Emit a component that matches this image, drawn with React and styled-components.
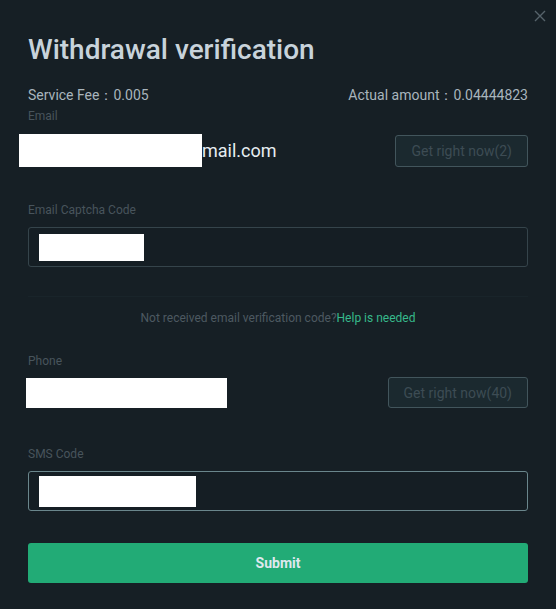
import React from 'react';
import styled, { createGlobalStyle } from 'styled-components';

const GlobalStyle = createGlobalStyle`
  html, body {
    margin: 0;
    padding: 0;
    background: #161f25;
  }
  body {
    font-family: Roboto, "Liberation Sans", Arial, sans-serif;
  }
`;

const App = () => {
  return (
    <>
      <GlobalStyle />
      <Modal>
        <CloseButton aria-label="close">
          <svg width="12" height="12" viewBox="0 0 12 12">
            <path d="M1 1 L11 11 M11 1 L1 11" stroke="#56636b" strokeWidth="1.4" fill="none" />
          </svg>
        </CloseButton>

        <Title>Withdrawal verification</Title>

        <InfoRow>
          <span>Service Fee：0.005</span>
          <span>Actual amount：0.04444823</span>
        </InfoRow>

        <Label $top={3}>Email</Label>
        <FieldRow $top={10}>
          <EmailValue>
            <Redacted $w={183} $h={33} $shift={-9} />
            mail.com
          </EmailValue>
          <CodeButton $h={32}>Get right now(2)</CodeButton>
        </FieldRow>

        <Label $top={35}>Email Captcha Code</Label>
        <Input>
          <Redacted $w={105} $h={27} $shift={0} />
        </Input>

        <Divider />

        <Help>
          Not received email verification code?<HelpLink href="#">Help is needed</HelpLink>
        </Help>

        <Label $top={27}>Phone</Label>
        <FieldRow $top={8}>
          <Redacted $w={201} $h={30} $shift={-2} />
          <CodeButton $h={31}>Get right now(40)</CodeButton>
        </FieldRow>

        <Label $top={38}>SMS Code</Label>
        <Input $focused>
          <Redacted $w={157} $h={31} $shift={0} />
        </Input>

        <SubmitButton>Submit</SubmitButton>
      </Modal>
    </>
  );
};

export default App;

const Modal = styled.div`
  position: relative;
  box-sizing: border-box;
  width: 556px;
  height: 609px;
  padding: 0 28px;
  display: flex;
  flex-direction: column;
  background: #161f25;
  overflow: hidden;
`;

const CloseButton = styled.button`
  position: absolute;
  top: 10px;
  right: 10px;
  width: 12px;
  height: 12px;
  padding: 0;
  border: none;
  background: none;
  display: flex;
  cursor: pointer;
`;

const Title = styled.h1`
  margin: 33px 0 0;
  font-size: 28px;
  line-height: 34px;
  font-weight: 500;
  color: #c8d3db;
`;

const InfoRow = styled.div`
  margin-top: 18px;
  display: flex;
  justify-content: space-between;
  font-size: 14px;
  line-height: 20px;
  color: #a9b5bd;
`;

const Label = styled.div`
  margin-top: ${({ $top }) => $top}px;
  font-size: 12px;
  line-height: 16px;
  color: #48545c;
`;

const FieldRow = styled.div`
  margin-top: ${({ $top }) => $top}px;
  display: flex;
  align-items: center;
  justify-content: space-between;
`;

const EmailValue = styled.div`
  display: flex;
  align-items: center;
  font-size: 18px;
  color: #e6edf1;
`;

const Redacted = styled.span`
  display: inline-block;
  flex-shrink: 0;
  width: ${({ $w }) => $w}px;
  height: ${({ $h }) => $h}px;
  margin-left: ${({ $shift }) => $shift}px;
  background: #ffffff;
`;

const CodeButton = styled.button`
  box-sizing: border-box;
  height: ${({ $h }) => $h}px;
  padding: 0 15px;
  border: 1px solid #42555c;
  border-radius: 3px;
  background: #1b292f;
  color: #3d4c54;
  font-family: inherit;
  font-size: 14px;
  cursor: not-allowed;
`;

const Input = styled.div`
  box-sizing: border-box;
  margin-top: 9px;
  height: 40px;
  padding: 0 10px;
  display: flex;
  align-items: center;
  border: 1px solid ${({ $focused }) => ($focused ? '#6a868c' : '#35444b')};
  border-radius: 3px;
  background: #151e24;
`;

const Divider = styled.div`
  margin-top: 29px;
  height: 1px;
  background: #19242a;
`;

const Help = styled.div`
  margin-top: 13px;
  text-align: center;
  font-size: 12px;
  line-height: 16px;
  color: #4d5961;
`;

const HelpLink = styled.a`
  color: #36b98b;
  text-decoration: none;
`;

const SubmitButton = styled.button`
  margin-top: 32px;
  height: 40px;
  border: none;
  border-radius: 3px;
  background: #22ab76;
  color: #dfe8ee;
  font-family: inherit;
  font-size: 14px;
  font-weight: 700;
  cursor: pointer;
`;
